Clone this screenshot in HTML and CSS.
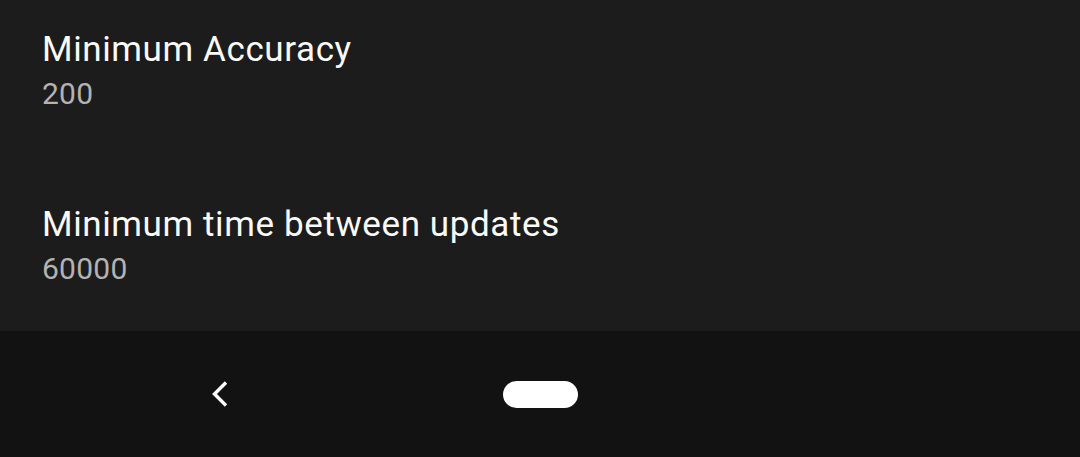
FILE: index.html
```html
<!DOCTYPE html>
<html>
<head>
<meta charset="utf-8">
<link rel="stylesheet" href="styles.css">
</head>
<body>
<div class="screen">
  <main class="list">
    <div class="pref">
      <div class="title">Minimum Accuracy</div>
      <div class="summary">200</div>
    </div>
    <div class="pref">
      <div class="title">Minimum time between updates</div>
      <div class="summary">60000</div>
    </div>
  </main>
  <nav class="navbar">
    <div class="nav-slot">
      <svg class="back" width="22" height="30" viewBox="0 0 22 30">
        <path d="M17 3.5 L5.5 15 L17 26.5" fill="none" stroke="#ffffff" stroke-width="3.4" stroke-linecap="butt" stroke-linejoin="miter"/>
      </svg>
    </div>
    <div class="nav-slot">
      <div class="home"></div>
    </div>
    <div class="nav-slot"></div>
  </nav>
</div>
</body>
</html>
```
FILE: styles.css
```css
html, body {
  margin: 0;
  padding: 0;
  background: #1c1c1c;
}
.screen {
  width: 1080px;
  height: 457px;
  display: flex;
  flex-direction: column;
  overflow: hidden;
  font-family: Roboto, "Noto Sans", sans-serif;
}
.list {
  flex: 1;
  min-height: 0;
  overflow: hidden;
  background: #1c1c1c;
}
.pref {
  height: 175px;
  box-sizing: border-box;
  padding: 28px 42px 0 42px;
}
.title {
  font-size: 35px;
  line-height: 44px;
  letter-spacing: 0.6px;
  color: #fafafa;
}
.summary {
  margin-top: 3px;
  font-size: 30px;
  line-height: 38px;
  letter-spacing: 0.25px;
  color: #b3b3b3;
}
.navbar {
  height: 126px;
  flex: none;
  background: #121212;
  display: grid;
  grid-template-columns: 1fr 1fr 1fr;
  padding: 0 60px;
  box-sizing: border-box;
}
.nav-slot {
  display: flex;
  align-items: center;
  justify-content: center;
}
.back {
  display: block;
}
.home {
  width: 75px;
  height: 27px;
  border-radius: 14px;
  background: #ffffff;
}
```
